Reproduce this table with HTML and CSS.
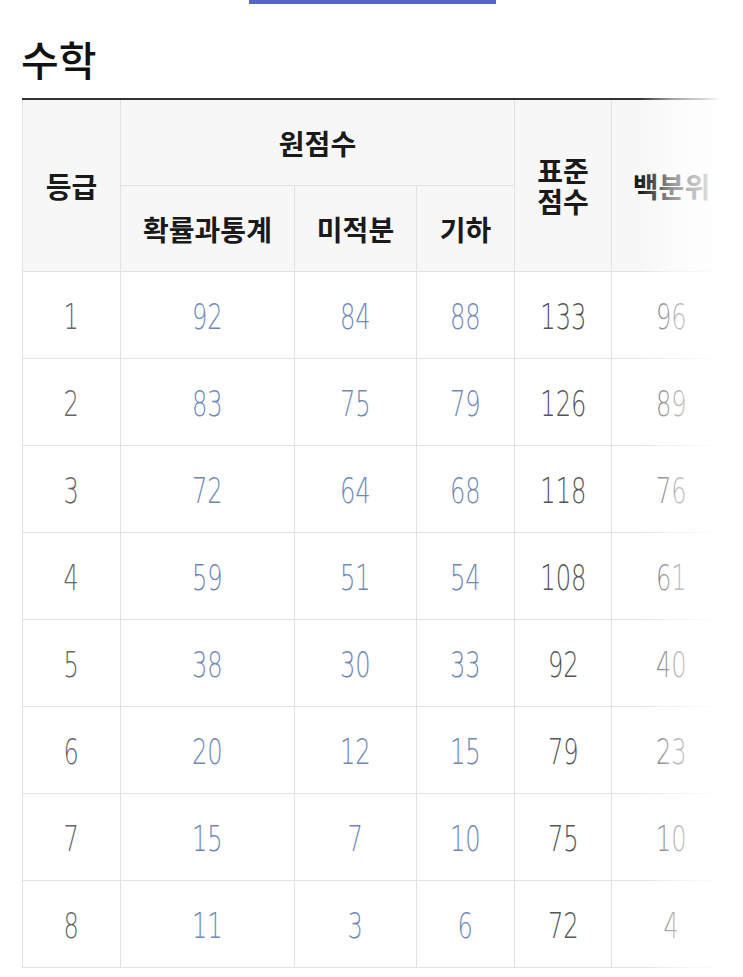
FILE: index.html
```html
<!DOCTYPE html>
<html lang="ko">
<head>
<meta charset="utf-8">
<title>수학</title>
<link rel="stylesheet" href="styles.css">
</head>
<body>
<div class="topbar"></div>
<h2 class="title">수학</h2>
<div class="wrap">
  <table class="grade-table">
    <colgroup>
      <col class="c-grade">
      <col class="c-prob">
      <col class="c-calc">
      <col class="c-geo">
      <col class="c-std">
      <col class="c-pct">
    </colgroup>
    <thead>
      <tr>
        <th rowspan="2">등급</th>
        <th colspan="3" class="raw">원점수</th>
        <th rowspan="2" class="two"><span class="ln">표준</span><span class="ln">점수</span></th>
        <th rowspan="2">백분위</th>
      </tr>
      <tr>
        <th class="sub">확률과통계</th>
        <th class="sub">미적분</th>
        <th class="sub">기하</th>
      </tr>
    </thead>
    <tbody>
      <tr><td class="g"><span>1</span></td><td class="b"><span>92</span></td><td class="b"><span>84</span></td><td class="b"><span>88</span></td><td class="s"><span>133</span></td><td class="s"><span>96</span></td></tr>
      <tr><td class="g"><span>2</span></td><td class="b"><span>83</span></td><td class="b"><span>75</span></td><td class="b"><span>79</span></td><td class="s"><span>126</span></td><td class="s"><span>89</span></td></tr>
      <tr><td class="g"><span>3</span></td><td class="b"><span>72</span></td><td class="b"><span>64</span></td><td class="b"><span>68</span></td><td class="s"><span>118</span></td><td class="s"><span>76</span></td></tr>
      <tr><td class="g"><span>4</span></td><td class="b"><span>59</span></td><td class="b"><span>51</span></td><td class="b"><span>54</span></td><td class="s"><span>108</span></td><td class="s"><span>61</span></td></tr>
      <tr><td class="g"><span>5</span></td><td class="b"><span>38</span></td><td class="b"><span>30</span></td><td class="b"><span>33</span></td><td class="s"><span>92</span></td><td class="s"><span>40</span></td></tr>
      <tr><td class="g"><span>6</span></td><td class="b"><span>20</span></td><td class="b"><span>12</span></td><td class="b"><span>15</span></td><td class="s"><span>79</span></td><td class="s"><span>23</span></td></tr>
      <tr><td class="g"><span>7</span></td><td class="b"><span>15</span></td><td class="b"><span>7</span></td><td class="b"><span>10</span></td><td class="s"><span>75</span></td><td class="s"><span>10</span></td></tr>
      <tr><td class="g"><span>8</span></td><td class="b"><span>11</span></td><td class="b"><span>3</span></td><td class="b"><span>6</span></td><td class="s"><span>72</span></td><td class="s"><span>4</span></td></tr>
    </tbody>
  </table>
  <div class="fade"></div>
</div>
</body>
</html>
```
FILE: styles.css
```css
html, body {
  margin: 0;
  padding: 0;
  background: #fff;
}
body {
  font-family: "Noto Sans CJK KR", "Noto Sans", sans-serif;
  color: #222;
  overflow: hidden;
}
.topbar {
  margin-left: 249px;
  width: 247px;
  height: 4px;
  background: #5566c8;
}
.title {
  margin: 34px 0 0 21px;
  font-size: 41px;
  line-height: 41px;
  font-weight: 500;
  color: #111;
  height: 60px;
}
.wrap {
  position: relative;
  margin-left: 22px;
  width: 699px;
  overflow: hidden;
}
.grade-table {
  border-collapse: collapse;
  table-layout: fixed;
  width: 709px;
  border-top: 2px solid #333;
}
.c-grade { width: 98px; }
.c-prob { width: 174px; }
.c-calc { width: 122px; }
.c-geo { width: 98px; }
.c-std { width: 97px; }
.c-pct { width: 120px; }

.grade-table th,
.grade-table td {
  border: 1px solid #e2e2e2;
  text-align: center;
  vertical-align: middle;
  padding: 0;
}
.grade-table th {
  background: #f7f7f7;
  font-size: 28px;
  font-weight: 700;
  color: #1a1a1a;
  height: 85px;
  line-height: 30px;
}
.grade-table th .ln {
  display: block;
  height: 31px;
  line-height: 31px;
}
.grade-table td {
  height: 86px;
  font-family: "DejaVu Sans", "Noto Sans CJK KR", sans-serif;
  font-weight: 200;
  font-size: 35px;
  line-height: 40px;
}
.grade-table td span {
  display: inline-block;
  transform: scaleX(0.69);
  position: relative;
  top: 2px;
}
.grade-table td.g { color: #666; }
.grade-table td.b { color: #6e89b6; }
.grade-table td.s { color: #555; }

.fade {
  position: absolute;
  top: 0;
  bottom: 0;
  left: 618px;
  width: 81px;
  background: linear-gradient(to right, rgba(255,255,255,0) 0%, rgba(255,255,255,0.55) 40%, rgba(255,255,255,0.8) 78%, #fff 100%);
  pointer-events: none;
}
```
